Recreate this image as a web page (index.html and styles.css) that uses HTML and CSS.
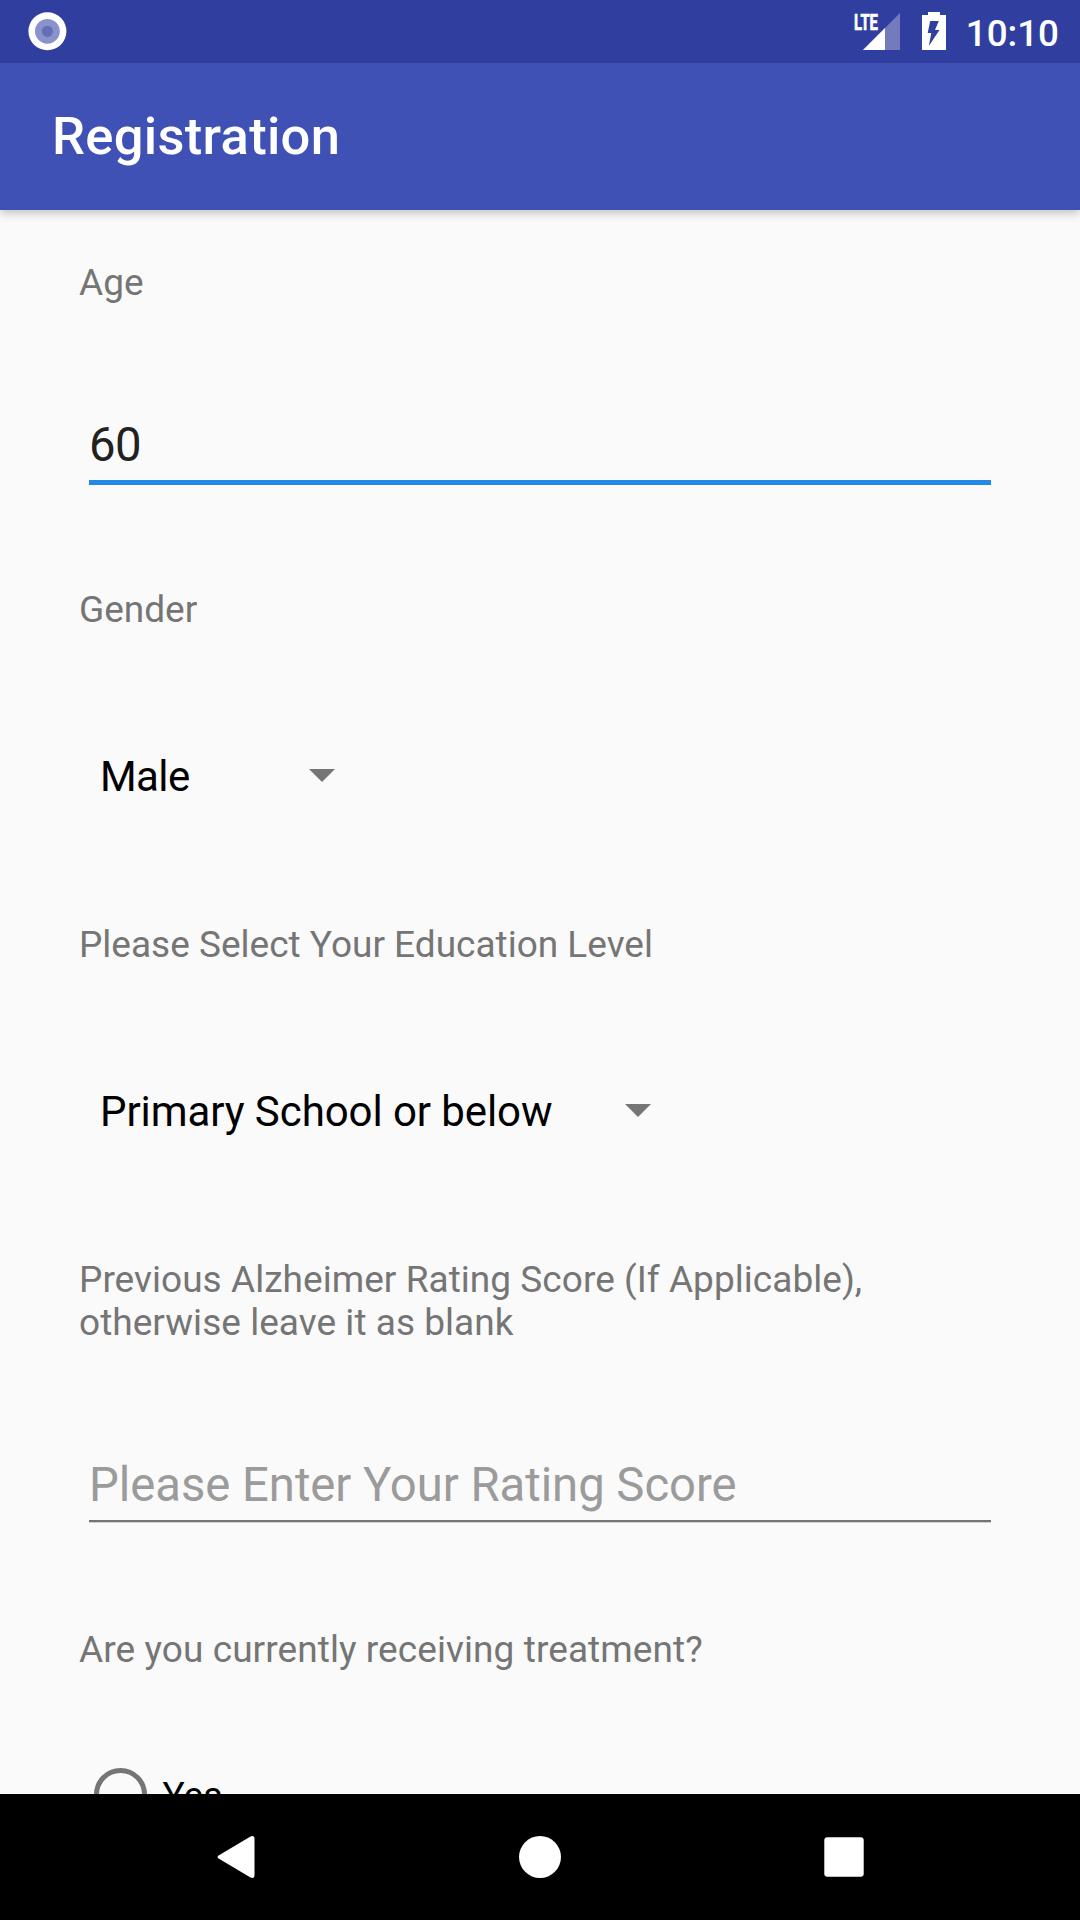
FILE: index.html
```html
<!DOCTYPE html>
<html lang="en">
<head>
<meta charset="utf-8">
<title>Registration</title>
<link rel="stylesheet" href="styles.css">
</head>
<body>
<div class="screen">
  <header class="status-bar">
    <svg class="status-dot" width="41" height="40" viewBox="0 0 41 40">
      <circle cx="20.4" cy="20.3" r="19" fill="#fff"/>
      <circle cx="20.4" cy="20.3" r="12.4" fill="#8a92cb"/>
      <circle cx="20.4" cy="20.3" r="5.6" fill="#666eb8"/>
    </svg>
    <div class="status-icons">
      <svg class="signal" width="48" height="40" viewBox="0 0 48 40">
        <path d="M10 38L47 1V38Z" fill="#737bbc"/>
        <path d="M10 38L32 16V38Z" fill="#fff"/>
        <text class="lte" x="1" y="17.7" textLength="24" lengthAdjust="spacingAndGlyphs">LTE</text>
      </svg>
      <svg class="battery" width="24" height="38" viewBox="0 0 24 38">
        <path d="M6 0H18V3H24V38H0V3H6Z" fill="#fff"/>
        <path d="M8.2 9H16.8L13 18H17.5L6.8 34L9.3 21H5.7Z" fill="#303f9f"/>
      </svg>
      <span class="clock">10:10</span>
    </div>
  </header>
  <div class="app-bar"><h1 class="title">Registration</h1></div>
  <main class="form">
    <section class="group group-age">
      <label class="label">Age</label>
      <div class="field field-focused">60</div>
    </section>
    <section class="group group-select">
      <label class="label">Gender</label>
      <div class="spinner spinner-gender">
        <span>Male</span>
        <svg class="arrow" width="26" height="13" viewBox="0 0 26 13"><path d="M0 0H26L13 13Z"/></svg>
      </div>
    </section>
    <section class="group group-select">
      <label class="label">Please Select Your Education Level</label>
      <div class="spinner spinner-education">
        <span>Primary School or below</span>
        <svg class="arrow" width="26" height="13" viewBox="0 0 26 13"><path d="M0 0H26L13 13Z"/></svg>
      </div>
    </section>
    <section class="group group-score">
      <label class="label">Previous Alzheimer Rating Score (If Applicable),<br>otherwise leave it as blank</label>
      <div class="field field-hint">Please Enter Your Rating Score</div>
    </section>
    <section class="group group-treatment">
      <label class="label">Are you currently receiving treatment?</label>
      <div class="radio"><span class="radio-ring"></span><span class="radio-text">Yes</span></div>
    </section>
  </main>
  <nav class="nav-bar">
    <svg width="44" height="44" viewBox="0 0 44 44"><path d="M5 20.2L36.5 1.4Q40.5 -.2 40.5 4V40Q40.5 44.2 36.5 42.6L5 23.8Q2 22 5 20.2Z"/></svg>
    <svg width="44" height="44" viewBox="0 0 44 44"><circle cx="22" cy="22" r="21"/></svg>
    <svg width="44" height="44" viewBox="0 0 44 44"><rect x="2.3" y="2.3" width="39.4" height="39.4" rx="3"/></svg>
  </nav>
</div>
</body>
</html>
```
FILE: styles.css
```css
* { box-sizing: border-box; }

body {
  margin: 0;
  font-family: Roboto, "Liberation Sans", sans-serif;
}

svg {
  display: block;
  overflow: visible;
}

.screen {
  display: flex;
  flex-direction: column;
  width: 1080px;
  height: 1920px;
  overflow: hidden;
  background: #fafafa;
}

.status-bar {
  z-index: 2;
  display: flex;
  flex: none;
  align-items: flex-start;
  justify-content: space-between;
  height: 63px;
  padding: 11px 21px 0 27px;
  background: #303f9f;
}

.status-icons {
  display: flex;
  align-items: flex-start;
  padding-top: 1px;
}

.battery { margin: 0 20px 0 21px; }

.lte {
  fill: #fff;
  stroke: #fff;
  stroke-width: .7px;
  font-size: 22.5px;
  font-weight: 700;
}

.clock {
  color: #fff;
  font-size: 36.75px;
  font-weight: 500;
  line-height: 43px;
}

.app-bar {
  z-index: 1;
  display: flex;
  flex: none;
  align-items: center;
  height: 147px;
  padding: 0 0 2px 52px;
  background: #3f51b5;
  box-shadow: 0 2px 10px rgba(0, 0, 0, .28);
}

.title {
  margin: 0;
  color: #fff;
  font-size: 52.5px;
  font-weight: 500;
  line-height: 62px;
  letter-spacing: .3px;
}

.form {
  flex: 1;
  min-height: 0;
  padding: 51px 79px 0;
  overflow: hidden;
}

.group-age { height: 327px; }
.group-select { height: 335px; }
.group-score { height: 370px; }

.label {
  display: block;
  color: #757575;
  font-size: 37px;
  line-height: 43px;
}

.group-score .label { letter-spacing: .04px; }
.group-treatment .label { letter-spacing: .08px; }

.field {
  margin: 114px 10px 0;
  font-size: 47.25px;
  line-height: 55px;
}

.field-focused {
  height: 67px;
  color: #212121;
  border-bottom: 5px solid #2488e5;
  letter-spacing: -.6px;
}

.field-hint {
  height: 64px;
  color: #9b9b9b;
  border-bottom: 2px solid #757575;
  box-shadow: 0 1px #d0d0d0;
  letter-spacing: -.03px;
}

.spinner {
  display: flex;
  justify-content: space-between;
  margin: 121px 0 0 21px;
  color: #000;
  font-size: 42px;
  line-height: 49px;
}

.spinner-gender {
  width: 234.5px;
  letter-spacing: -.6px;
}

.spinner-education {
  width: 550.5px;
  letter-spacing: -.08px;
}

.arrow {
  margin-top: 17px;
  fill: #757575;
}

.radio {
  display: flex;
  align-items: flex-start;
  gap: 15.5px;
  padding: 96.5px 0 0 15px;
}

.radio-ring {
  width: 53px;
  height: 53px;
  border: 5.25px solid #757575;
  border-radius: 50%;
}

.radio-text {
  padding-top: 6px;
  color: #000;
  font-size: 37px;
  line-height: 43px;
}

.nav-bar {
  z-index: 1;
  display: flex;
  flex: none;
  align-items: center;
  justify-content: space-between;
  height: 126px;
  padding: 0 214px;
  background: #000;
  fill: #fff;
}
```
